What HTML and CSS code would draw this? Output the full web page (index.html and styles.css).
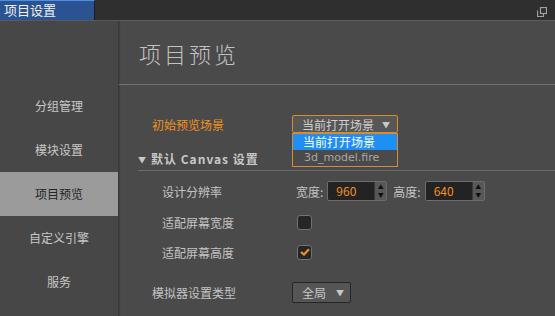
FILE: index.html
```html
<!DOCTYPE html>
<html lang="zh">
<head>
<meta charset="utf-8">
<link rel="stylesheet" href="styles.css">
</head>
<body>
<div class="app">
  <div class="topbar">
    <div class="tab">项目设置</div>
    <div class="spacer"></div>
    <svg class="popout" width="10" height="10" viewBox="0 0 10 10">
      <rect x="3.5" y="0.5" width="6" height="6" fill="none" stroke="#a0a0a0" stroke-width="1.2"/>
      <path d="M0.5 3.5 V9.5 H6.5 V7" fill="none" stroke="#a0a0a0" stroke-width="1.2"/>
    </svg>
  </div>
  <div class="body">
    <nav class="sidebar">
      <div class="nav-item">分组管理</div>
      <div class="nav-item">模块设置</div>
      <div class="nav-item active">项目预览</div>
      <div class="nav-item">自定义引擎</div>
      <div class="nav-item">服务</div>
    </nav>
    <main class="main">
      <h1 class="title">项目预览</h1>
      <div class="content">
        <div class="row first">
          <div class="label orange">初始预览场景</div>
          <div class="select-wrap">
            <div class="select"><span>当前打开场景</span><span class="caret">▼</span></div>
            <div class="menu">
              <div class="menu-item selected">当前打开场景</div>
              <div class="menu-item latin">3d_model.fire</div>
            </div>
          </div>
        </div>
        <div class="section"><span class="tri">▼</span>默认 Canvas 设置</div>
        <div class="row nested res">
          <div class="label">设计分辨率</div>
          <div class="controls">
            <span class="mini">宽度:</span>
            <div class="spin"><span class="val">960</span><span class="arrows"><i>▲</i><i>▼</i></span></div>
            <span class="mini">高度:</span>
            <div class="spin"><span class="val">640</span><span class="arrows"><i>▲</i><i>▼</i></span></div>
          </div>
        </div>
        <div class="row nested cb1">
          <div class="label">适配屏幕宽度</div>
          <div class="checkbox"></div>
        </div>
        <div class="row nested cb2">
          <div class="label">适配屏幕高度</div>
          <div class="checkbox">
            <svg width="10" height="8" viewBox="0 0 10 8"><path d="M1 4 L4 6.5 L9 1.2" fill="none" stroke="#f39020" stroke-width="2.2"/></svg>
          </div>
        </div>
        <div class="row sim">
          <div class="label">模拟器设置类型</div>
          <div class="button"><span>全局</span><span class="caret">▼</span></div>
        </div>
      </div>
    </main>
  </div>
</div>
</body>
</html>
```
FILE: styles.css
```css
* { box-sizing: border-box; margin: 0; padding: 0; }
html, body { width: 555px; height: 316px; overflow: hidden; }
body {
  background: #4a4a4a;
  font-family: "Noto Sans CJK SC", "DejaVu Sans", sans-serif;
  font-size: 12px;
  color: #c4c4c4;
}
.app { display: flex; flex-direction: column; height: 316px; }
.topbar {
  height: 21px;
  display: flex;
  align-items: stretch;
  background: #2f2f2f;
  border-bottom: 1px solid #5e5e5e;
}
.tab {
  width: 95px;
  background: #2b5391;
  border-top: 1px solid #4b8fe6;
  border-right: 1px solid #1e1e1e;
  color: #f0f0f0;
  font-size: 13px;
  line-height: 18px;
  padding-left: 4px;
}
.spacer { flex: 1; }
.popout { margin: 7px 8px 0 0; }
.body { flex: 1; display: flex; }
.sidebar {
  width: 119px;
  background: #474747;
  border-right: 1px solid #393939;
  box-shadow: 1px 0 1px #404040;
  padding-top: 63px;
  display: flex;
  flex-direction: column;
}
.nav-item {
  height: 44px;
  line-height: 44px;
  text-align: center;
  color: #c8c8c8;
  font-size: 12px;
}
.nav-item.active { background: #9b9b9b; color: #262626; }
.main { flex: 1; display: flex; flex-direction: column; }
.title {
  height: 64px;
  border-bottom: 1px solid #727272;
  font-weight: 300;
  font-size: 22px;
  letter-spacing: 3px;
  color: #c2c2c2;
  padding: 16px 0 0 20px;
  line-height: 32px;
}
.content { padding-left: 33px; }
.row { display: flex; align-items: center; height: 20px; }
.label { width: 140px; white-space: nowrap; }
.nested { padding-left: 10px; }
.nested .label { width: 130px; }
.orange { color: #f39020; }
.first { margin-top: 29px; }
.select-wrap { position: relative; }
.select {
  width: 106px;
  height: 18px;
  background: #575757;
  border: 1px solid #d98b2e;
  border-radius: 2px;
  display: flex;
  align-items: center;
  justify-content: space-between;
  padding: 0 7px 0 9px;
  color: #cfcfcf;
  font-size: 12px;
}
.caret { font-size: 8px; color: #c8c8c8; }
.menu {
  position: absolute;
  left: 0;
  top: 18px;
  width: 106px;
  border: 1px solid #d98b2e;
  background: #4a4a4a;
}
.menu-item { height: 16px; line-height: 16px; padding-left: 10px; color: #a8a8a8; font-size: 12px; }
.menu-item.latin { font-family: "DejaVu Sans", sans-serif; font-size: 11px; padding-left: 11px; }
.menu-item.selected { background: #1e8ff5; color: #ffffff; }
.section {
  margin: 15px 0 0 -14px;
  height: 22px;
  border-bottom: 1px solid #6a6a6a;
  font-weight: bold;
  font-size: 12px;
  letter-spacing: 1px;
  color: #c8c8c8;
  line-height: 20px;
}
.tri { font-size: 8px; margin-right: 4px; vertical-align: 1px; }
.res { margin-top: 10px; }
.controls { display: flex; align-items: center; }
.mini { margin: 0 4px 0 4px; color: #c4c4c4; }
.spin {
  width: 60px;
  height: 20px;
  background: #232323;
  border: 1px solid #6c6c6c;
  border-radius: 2px;
  display: flex;
  margin-right: 2px;
}
.val { flex: 1; color: #f39020; padding-left: 8px; line-height: 18px; font-size: 12px; }
.arrows {
  width: 12px;
  background: #585858;
  display: flex;
  flex-direction: column;
  align-items: center;
  justify-content: center;
  border-left: 1px solid #3a3a3a;
}
.arrows i { font-style: normal; font-size: 6px; line-height: 8px; color: #111; }
.cb1 { margin-top: 11px; }
.cb2 { margin-top: 10px; }
.checkbox {
  width: 15px;
  height: 15px;
  margin-left: 5px;
  background: #262626;
  border: 1px solid #727272;
  border-radius: 3px;
  display: flex;
  align-items: center;
  justify-content: center;
}
.sim { margin-top: 20px; }
.button {
  width: 59px;
  height: 21px;
  background: #555555;
  border: 1px solid #262626;
  border-radius: 2px;
  display: flex;
  align-items: center;
  padding-left: 9px;
  gap: 10px;
  color: #c8c8c8;
}
```
